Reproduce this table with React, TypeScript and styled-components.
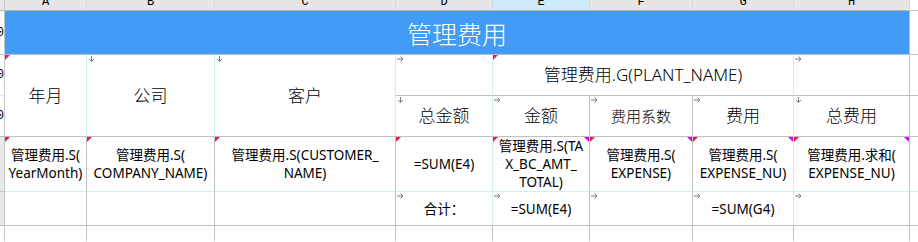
import React from "react";
import styled, { createGlobalStyle } from "styled-components";

const GlobalStyle = createGlobalStyle`
  html, body {
    margin: 0;
    padding: 0;
    background: #ffffff;
  }
  body {
    font-family: "Noto Sans", "Noto Sans CJK SC", sans-serif;
    color: #000000;
  }
`;

const GRAY = "#c0c0c0";
const CYAN = "#c8f3f3";

type Edge = "g" | "c" | "n";
type Mark = "red" | "pink" | "down" | "right";
type Kind = "head" | "headSmall" | "body";

interface CellDef {
  c: number;
  r: number;
  cs?: number;
  rs?: number;
  right?: Edge;
  bottom?: Edge;
  lines?: string[];
  kind?: Kind;
  marks?: Mark[];
}

const edgeColor = (e?: Edge) =>
  e === "c" ? CYAN : e === "n" ? "transparent" : GRAY;

const fontSize: Record<Kind, string> = {
  head: "17px",
  headSmall: "15px",
  body: "13.5px",
};

const COLS = ["A", "B", "C", "D", "E", "F", "G", "H"];

const Sheet = styled.div`
  display: grid;
  grid-template-columns: 5px 82px 128px 181px 97px 97px 103px 101px 116px 1fr;
  grid-template-rows: 11px 44px 41px 41px 55px 34px 1fr;
  width: 918px;
  height: 242px;
  overflow: hidden;
`;

const ColHead = styled.div<{ $c: number; $active?: boolean }>`
  grid-column: ${(p) => p.$c};
  grid-row: 1;
  box-sizing: border-box;
  background: ${(p) => (p.$active ? "#cfebf8" : "#e6e6e6")};
  border-right: 1px solid #d6d6d6;
  border-bottom: 1px solid #b4b4b4;
  overflow: hidden;
  display: flex;
  justify-content: center;
  font-family: "Liberation Mono", monospace;
  font-size: 12px;
  line-height: 12px;
`;

const ColLabel = styled.span`
  margin-top: -4px;
`;

const Corner = styled.div`
  grid-column: 1;
  grid-row: 1;
  box-sizing: border-box;
  background: #e6e6e6;
  border-right: 1px solid #c8c8c8;
  border-bottom: 1px solid #b4b4b4;
`;

const Filler = styled.div<{ $r: number; $bottom?: Edge }>`
  grid-column: 10;
  grid-row: ${(p) => p.$r};
  box-sizing: border-box;
  border-bottom: 1px solid ${(p) => edgeColor(p.$bottom)};
`;

const RowHead = styled.div<{ $r: number; $shade?: boolean; $bottom?: Edge }>`
  grid-column: 1;
  grid-row: ${(p) => p.$r};
  box-sizing: border-box;
  background: ${(p) => (p.$shade ? "#e8e8e8" : "#ffffff")};
  border-right: 1px solid #c8c8c8;
  border-bottom: 1px solid ${(p) => edgeColor(p.$bottom)};
  overflow: hidden;
  display: flex;
  align-items: center;
  justify-content: flex-end;
  font-family: "Liberation Mono", monospace;
  font-size: 12px;
`;

const Title = styled.div`
  grid-column: 2 / span 8;
  grid-row: 2;
  box-sizing: border-box;
  background: #419bf7;
  border-right: 1px solid ${GRAY};
  border-bottom: 1px solid ${GRAY};
  color: #ffffff;
  font-size: 25px;
  font-weight: 300;
  display: flex;
  align-items: center;
  justify-content: center;
`;

const Cell = styled.div<{
  $c: number;
  $r: number;
  $cs: number;
  $rs: number;
  $right?: Edge;
  $bottom?: Edge;
  $kind: Kind;
}>`
  grid-column: ${(p) => `${p.$c} / span ${p.$cs}`};
  grid-row: ${(p) => `${p.$r} / span ${p.$rs}`};
  position: relative;
  box-sizing: border-box;
  border-right: 1px solid ${(p) => edgeColor(p.$right)};
  border-bottom: 1px solid ${(p) => edgeColor(p.$bottom)};
  display: flex;
  flex-direction: column;
  align-items: center;
  justify-content: center;
  text-align: center;
  overflow: hidden;
  font-size: ${(p) => fontSize[p.$kind]};
  font-weight: ${(p) => (p.$kind === "body" ? 400 : 300)};
  line-height: 18px;
`;

const Line = styled.span`
  display: block;
  white-space: nowrap;
`;

const Flag = styled.i<{ $side: "left" | "right" }>`
  position: absolute;
  top: 0;
  ${(p) => p.$side}: 0;
  width: 0;
  height: 0;
  border-top: 5px solid ${(p) => (p.$side === "left" ? "#ee1a4e" : "#c414ee")};
  ${(p) =>
    p.$side === "left"
      ? "border-right: 5px solid transparent;"
      : "border-left: 5px solid transparent;"}
`;

const ArrowBox = styled.svg`
  position: absolute;
  top: 1px;
  left: 1px;
`;

const Arrow = ({ dir }: { dir: "down" | "right" }) => (
  <ArrowBox width="7" height="6" viewBox="0 0 7 6">
    <path
      d={dir === "down" ? "M3.5 0v5.2M1 3l2.5 2.5L6 3" : "M0 3h6M3.5 0.5L6 3L3.5 5.5"}
      stroke="#7d7d7d"
      strokeWidth="1"
      fill="none"
    />
  </ArrowBox>
);

const cells: CellDef[] = [
  // header rows 2-3
  { c: 2, r: 3, rs: 2, right: "c", lines: ["年月"], kind: "head", marks: ["red"] },
  { c: 3, r: 3, rs: 2, right: "c", lines: ["公司"], kind: "head", marks: ["down"] },
  { c: 4, r: 3, rs: 2, right: "c", lines: ["客户"], kind: "head", marks: ["down"] },
  { c: 5, r: 3, right: "c", marks: ["right"] },
  { c: 6, r: 3, cs: 3, right: "c", lines: ["管理费用.G(PLANT_NAME)"], kind: "head", marks: ["red"] },
  { c: 9, r: 3, marks: ["right"] },
  { c: 5, r: 4, right: "c", lines: ["总金额"], kind: "head", marks: ["down"] },
  { c: 6, r: 4, lines: ["金额"], kind: "head", marks: ["right"] },
  { c: 7, r: 4, lines: ["费用系数"], kind: "headSmall", marks: ["right"] },
  { c: 8, r: 4, right: "c", lines: ["费用"], kind: "head", marks: ["right"] },
  { c: 9, r: 4, lines: ["总费用"], kind: "head", marks: ["down"] },
  // data row
  { c: 2, r: 5, bottom: "c", lines: ["管理费用.S(", "YearMonth)"], marks: ["red"] },
  { c: 3, r: 5, bottom: "c", lines: ["管理费用.S(", "COMPANY_NAME)"], marks: ["red"] },
  { c: 4, r: 5, bottom: "c", lines: ["管理费用.S(CUSTOMER_", "NAME)"], marks: ["red"] },
  { c: 5, r: 5, bottom: "c", right: "c", lines: ["=SUM(E4)"], marks: ["red"] },
  { c: 6, r: 5, bottom: "c", lines: ["管理费用.S(TA", "X_BC_AMT_", "TOTAL)"], marks: ["red", "pink"] },
  { c: 7, r: 5, bottom: "c", lines: ["管理费用.S(", "EXPENSE)"], marks: ["red", "pink"] },
  { c: 8, r: 5, bottom: "c", right: "c", lines: ["管理费用.S(", "EXPENSE_NU)"], marks: ["red", "pink"] },
  { c: 9, r: 5, bottom: "c", lines: ["管理费用.求和(", "EXPENSE_NU)"], marks: ["red", "pink"] },
  // totals row
  { c: 2, r: 6 },
  { c: 3, r: 6 },
  { c: 4, r: 6 },
  { c: 5, r: 6, right: "c", lines: ["合计："], marks: ["right"] },
  { c: 6, r: 6, lines: ["=SUM(E4)"], marks: ["right"] },
  { c: 7, r: 6, marks: ["right"] },
  { c: 8, r: 6, right: "c", lines: ["=SUM(G4)"], marks: ["right"] },
  { c: 9, r: 6, marks: ["right"] },
  // trailing row
  ...[2, 3, 4, 5, 6, 7, 8, 9].map((c) => ({ c, r: 7, bottom: "n" as Edge })),
];

const renderMark = (m: Mark, i: number) => {
  if (m === "red") return <Flag key={i} $side="left" />;
  if (m === "pink") return <Flag key={i} $side="right" />;
  return <Arrow key={i} dir={m} />;
};

export default function App() {
  return (
    <>
      <GlobalStyle />
      <Sheet>
        <Corner />
        {COLS.map((label, i) => (
          <ColHead key={label} $c={i + 2} $active={label === "E"}>
            <ColLabel>{label}</ColLabel>
          </ColHead>
        ))}
        <Filler $r={1} />
        <RowHead $r={2}>0</RowHead>
        <RowHead $r={3} $bottom="c">0</RowHead>
        <RowHead $r={4}>0</RowHead>
        <RowHead $r={5} $shade />
        <RowHead $r={6} $shade />
        <RowHead $r={7} $bottom="n" />

        <Title>管理费用</Title>
        <Filler $r={2} />
        <Filler $r={3} />
        <Filler $r={4} />
        <Filler $r={5} $bottom="c" />
        <Filler $r={6} />
        <Filler $r={7} $bottom="n" />

        {cells.map((cell) => (
          <Cell
            key={`${cell.c}-${cell.r}`}
            $c={cell.c}
            $r={cell.r}
            $cs={cell.cs ?? 1}
            $rs={cell.rs ?? 1}
            $right={cell.right}
            $bottom={cell.bottom}
            $kind={cell.kind ?? "body"}
          >
            {cell.marks?.map(renderMark)}
            {cell.lines?.map((text) => (
              <Line key={text}>{text}</Line>
            ))}
          </Cell>
        ))}
      </Sheet>
    </>
  );
}
